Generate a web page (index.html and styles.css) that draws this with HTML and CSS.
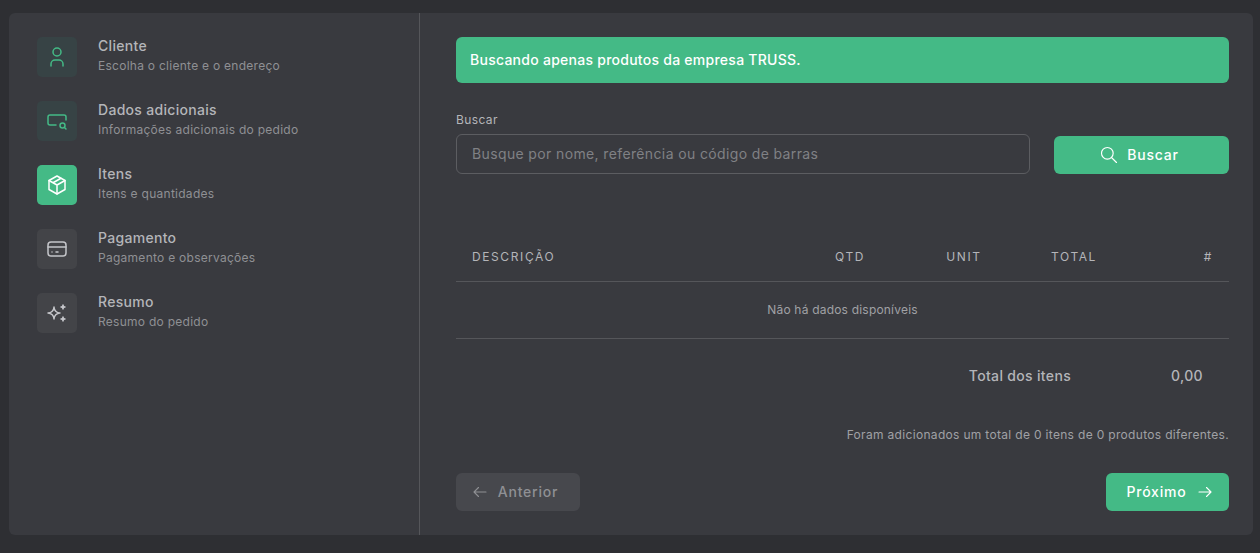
FILE: index.html
```html
<!DOCTYPE html>
<html>
	<head>
		<title>Pedido</title>
		<link rel="stylesheet" href="styles.css">
	</head>
	<body>
		<div class="card">
			<div class="steps">
				<div class="step done">
					<div class="step-icon">
						<svg width="24" height="24" viewBox="0 0 24 24" fill="none" stroke="currentColor" stroke-width="1.5" stroke-linecap="round" stroke-linejoin="round"><circle cx="12" cy="7" r="4"/><path d="M6 21v-2a4 4 0 0 1 4-4h4a4 4 0 0 1 4 4v2"/></svg>
					</div>
					<div class="step-text">
						<div class="step-title">Cliente</div>
						<div class="step-sub">Escolha o cliente e o endereço</div>
					</div>
				</div>
				<div class="step done">
					<div class="step-icon">
						<svg width="24" height="24" viewBox="0 0 24 24" fill="none" stroke="currentColor" stroke-width="1.5" stroke-linecap="round" stroke-linejoin="round"><path d="M11 16H5a2 2 0 0 1-2-2V8a2 2 0 0 1 2-2h14a2 2 0 0 1 2 2v3"/><circle cx="17.5" cy="16.5" r="2.5"/><path d="M19.5 18.5L21 20"/></svg>
					</div>
					<div class="step-text">
						<div class="step-title">Dados adicionais</div>
						<div class="step-sub">Informações adicionais do pedido</div>
					</div>
				</div>
				<div class="step active">
					<div class="step-icon">
						<svg width="24" height="24" viewBox="0 0 24 24" fill="none" stroke="currentColor" stroke-width="1.5" stroke-linecap="round" stroke-linejoin="round"><path d="M12 3l8 4.5v9L12 21l-8-4.5v-9z"/><path d="M12 12l8-4.5M12 12v9M12 12L4 7.5M16 5.25l-8 4.5"/></svg>
					</div>
					<div class="step-text">
						<div class="step-title">Itens</div>
						<div class="step-sub">Itens e quantidades</div>
					</div>
				</div>
				<div class="step">
					<div class="step-icon">
						<svg width="24" height="24" viewBox="0 0 24 24" fill="none" stroke="currentColor" stroke-width="1.5" stroke-linecap="round" stroke-linejoin="round"><rect x="3" y="5" width="18" height="14" rx="3"/><path d="M3 10h18M7 15h.01M11 15h2"/></svg>
					</div>
					<div class="step-text">
						<div class="step-title">Pagamento</div>
						<div class="step-sub">Pagamento e observações</div>
					</div>
				</div>
				<div class="step">
					<div class="step-icon">
						<svg width="24" height="24" viewBox="0 0 24 24" fill="none" stroke="currentColor" stroke-width="1.5" stroke-linecap="round" stroke-linejoin="round"><path d="M16 18a2 2 0 0 1 2 2a2 2 0 0 1 2-2a2 2 0 0 1-2-2a2 2 0 0 1-2 2zM16 6a2 2 0 0 1 2 2a2 2 0 0 1 2-2a2 2 0 0 1-2-2a2 2 0 0 1-2 2zM9 18a6 6 0 0 1 6-6a6 6 0 0 1-6-6a6 6 0 0 1-6 6a6 6 0 0 1 6 6z"/></svg>
					</div>
					<div class="step-text">
						<div class="step-title">Resumo</div>
						<div class="step-sub">Resumo do pedido</div>
					</div>
				</div>
			</div>

			<div class="main">
				<div class="alert">Buscando apenas produtos da empresa TRUSS.</div>

				<div class="search">
					<div class="search-field">
						<label class="search-label" for="busca">Buscar</label>
						<input class="search-input" id="busca" type="text" placeholder="Busque por nome, referência ou código de barras"/>
					</div>
					<button class="btn btn-green btn-search">
						<svg width="20" height="20" viewBox="0 0 24 24" fill="none" stroke="currentColor" stroke-width="1.4" stroke-linecap="round" stroke-linejoin="round"><circle cx="10" cy="10" r="7"/><path d="M21 21l-6-6"/></svg>
						<span>Buscar</span>
					</button>
				</div>

				<div class="table-head">
					<div class="col-desc">DESCRIÇÃO</div>
					<div class="col-qtd">QTD</div>
					<div class="col-unit">UNIT</div>
					<div class="col-total">TOTAL</div>
					<div class="col-hash">#</div>
				</div>
				<div class="table-empty">Não há dados disponíveis</div>

				<div class="totals">
					<span class="totals-label">Total dos itens</span>
					<span class="totals-value">0,00</span>
				</div>

				<div class="note">Foram adicionados um total de 0 itens de 0 produtos diferentes.</div>

				<div class="nav">
					<button class="btn btn-prev">
						<svg width="18" height="18" viewBox="0 0 24 24" fill="none" stroke="currentColor" stroke-width="1.5" stroke-linecap="round" stroke-linejoin="round"><path d="M4 12h16M4 12l6 6M4 12l6-6"/></svg>
						<span>Anterior</span>
					</button>
					<button class="btn btn-green btn-next">
						<span>Próximo</span>
						<svg width="18" height="18" viewBox="0 0 24 24" fill="none" stroke="currentColor" stroke-width="1.5" stroke-linecap="round" stroke-linejoin="round"><path d="M4 12h16M20 12l-6 6M20 12l-6-6"/></svg>
					</button>
				</div>
			</div>
		</div>
	</body>
</html>
```

FILE: styles.css
```css
html, body {
	height: 100%;
}

body {
	margin: 0;
	padding: 13px 7px 18px 9px;
	box-sizing: border-box;
	background-color: #2e2f33;
	font-family: "Inter", "Liberation Sans", sans-serif;
	color: #b4b5b9;
	overflow: hidden;
}

.card {
	display: flex;
	height: 522px;
	background-color: #393a3f;
	border-radius: 6px;
}

.steps {
	width: 411px;
	box-sizing: border-box;
	padding: 24px 28px;
	border-right: 1px solid #55565a;
	display: flex;
	flex-direction: column;
	gap: 24px;
}

.step {
	display: flex;
	align-items: center;
	gap: 21px;
	height: 40px;
}

.step-icon {
	width: 40px;
	height: 40px;
	border-radius: 5px;
	background-color: #434448;
	color: #c4c5c9;
	display: flex;
	align-items: center;
	justify-content: center;
}

.step.done .step-icon {
	background-color: #374345;
	color: #44ba86;
}

.step.active .step-icon {
	background-color: #44ba86;
	color: #fff;
}

.step-text {
	padding-bottom: 2px;
}

.step-title {
	font-size: 14px;
	font-weight: 500;
	line-height: 20px;
	letter-spacing: 0.3px;
	color: #b4b5b9;
}

.step-sub {
	font-size: 12px;
	line-height: 20px;
	letter-spacing: 0.27px;
	color: #8f9094;
}

.main {
	flex: 1;
	padding: 24px 24px 24px 36px;
	display: flex;
	flex-direction: column;
	min-width: 0;
}

.alert {
	height: 46px;
	box-sizing: border-box;
	padding: 0 14px;
	background-color: #44ba86;
	border-radius: 6px;
	color: #fff;
	font-size: 14px;
	font-weight: 500;
	letter-spacing: 0.26px;
	line-height: 45px;
}

.search {
	display: flex;
	align-items: flex-end;
	gap: 24px;
	margin-top: 26px;
}

.search-field {
	flex: 1;
}

.search-label {
	display: block;
	font-size: 12px;
	line-height: 20px;
	letter-spacing: 0.4px;
	margin-top: 1px;
	margin-bottom: 4px;
	color: #b4b5b9;
}

.search-input {
	display: block;
	width: 100%;
	height: 40px;
	box-sizing: border-box;
	padding: 0 15px 2px;
	background: transparent;
	border: 1px solid #5c5d61;
	border-radius: 6px;
	color: #b4b5b9;
	font-family: inherit;
	font-size: 14px;
	letter-spacing: 0.37px;
}

.search-input::placeholder {
	color: #808185;
	opacity: 1;
}

.btn {
	display: flex;
	align-items: center;
	justify-content: center;
	height: 38px;
	border: none;
	border-radius: 6px;
	font-family: inherit;
	font-size: 14px;
	font-weight: 500;
	letter-spacing: 0.8px;
}

.btn span {
	padding-bottom: 2px;
}

.btn-green {
	background-color: #44ba86;
	color: #fff;
}

.btn-search {
	width: 175px;
	gap: 8px;
	padding: 0 5px 0 0;
}

.table-head {
	display: flex;
	align-items: center;
	height: 49px;
	margin-top: 58px;
	padding: 0 16px;
	border-bottom: 1px solid #55565a;
	font-size: 12px;
	font-weight: 400;
	letter-spacing: 1.6px;
	color: #b4b5b9;
}

.col-desc {
	width: 328px;
}

.col-qtd {
	width: 100px;
	text-align: center;
}

.col-unit {
	width: 100px;
	margin-left: 14px;
	text-align: center;
}

.col-total {
	margin-left: 37px;
	width: 80px;
}

.col-hash {
	flex: 1;
	text-align: right;
}

.table-empty {
	height: 56px;
	border-bottom: 1px solid #55565a;
	text-align: center;
	font-size: 12px;
	letter-spacing: 0.2px;
	line-height: 56px;
	color: #a0a1a5;
}

.totals {
	display: flex;
	justify-content: flex-end;
	margin-top: 27px;
	padding-right: 26px;
	font-size: 14px;
	font-weight: 500;
	letter-spacing: 0.33px;
	line-height: 20px;
}

.totals-value {
	width: 132px;
	text-align: right;
}

.note {
	margin-top: 39px;
	text-align: right;
	font-size: 12px;
	letter-spacing: 0.32px;
	line-height: 20px;
	color: #a0a1a5;
}

.nav {
	display: flex;
	justify-content: space-between;
	margin-top: auto;
}

.btn-prev {
	width: 124px;
	gap: 9px;
	padding: 0 7px 0 0;
	background-color: #47484d;
	color: #8f9094;
}

.btn-next {
	width: 123px;
	gap: 9px;
	padding: 0 0 0 5px;
}
```
